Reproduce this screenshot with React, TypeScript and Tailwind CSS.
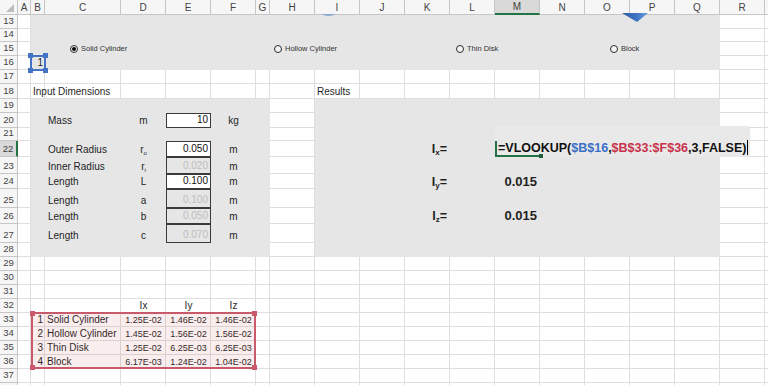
import React from "react";

const COLS = ["A", "B", "C", "D", "E", "F", "G", "H", "I", "J", "K", "L", "M", "N", "O", "P", "Q", "R", "S"];
const ROWS = Array.from({ length: 26 }, (_, i) => i + 13);

// column and row tracks of the sheet, shared by the gridline layer and the content layer
const GRID =
  "grid grid-cols-[18px_13px_14px_76px_45px_45px_45px_14px_45px_45px_45px_45px_45px_45px_45px_45px_45px_45px_45px_45px] grid-rows-[15px_14px_13px_14px_14px_14px_15px_14px_15px_13px_16px_17px_15px_19px_16px_19px_14px_14px_14px_14px_14px_14px_14px_14px_14px_14px_14px]";

function Radio({ label, on }: { label: string; on?: boolean }) {
  return (
    <div className="flex items-center gap-[3px] text-[7.5px] text-[#333]">
      <span className="w-[8px] h-[8px] rounded-full border border-[#2b2b2b] bg-[#f4f4f4] flex items-center justify-center">
        {on && <span className="w-[4px] h-[4px] rounded-full bg-black" />}
      </span>
      {label}
    </div>
  );
}

function Handles({ color }: { color: string }) {
  return (
    <>
      <span className={`absolute -left-[3px] -top-[3px] w-[5px] h-[5px] ${color}`} />
      <span className={`absolute -right-[3px] -top-[3px] w-[5px] h-[5px] ${color}`} />
      <span className={`absolute -left-[3px] -bottom-[3px] w-[5px] h-[5px] ${color}`} />
      <span className={`absolute -right-[3px] -bottom-[3px] w-[5px] h-[5px] ${color}`} />
    </>
  );
}

function InputRow({
  row,
  label,
  sym,
  value,
  unit,
  enabled,
}: {
  row: string;
  label: string;
  sym: React.ReactNode;
  value: string;
  unit: string;
  enabled?: boolean;
}) {
  return (
    <>
      <div className={`${row} col-[4/5] flex items-end pl-[3px] pb-[1px]`}>{label}</div>
      <div className={`${row} col-[5/6] flex items-end justify-center pb-[1px]`}>{sym}</div>
      <div
        className={`${row} col-[6/7] flex items-end justify-end pr-[2px] pb-[1px] border border-[#3a3a3a] ${
          enabled ? "bg-white text-[#111]" : "text-[#bdbdbd]"
        }`}
      >
        {value}
      </div>
      <div className={`${row} col-[7/8] flex items-end justify-center pb-[1px]`}>{unit}</div>
    </>
  );
}

function TableRow({ row, n, name, vals }: { row: string; n: string; name: string; vals: string[] }) {
  return (
    <>
      <div className={`${row} col-[3/4] flex items-end justify-end pr-[2px] pb-[1px]`}>{n}</div>
      <div className={`${row} col-[4/5] flex items-end pl-[2px] pb-[1px]`}>{name}</div>
      <div className={`${row} col-[5/6] flex items-end justify-center pb-[1px] text-[9px]`}>{vals[0]}</div>
      <div className={`${row} col-[6/7] flex items-end justify-center pb-[1px] text-[9px]`}>{vals[1]}</div>
      <div className={`${row} col-[7/8] flex items-end justify-center pb-[1px] text-[9px]`}>{vals[2]}</div>
    </>
  );
}

export default function App() {
  return (
    <div className="relative w-[768px] h-[385px] overflow-hidden bg-white font-['Liberation_Sans',Arial,sans-serif]">
      <div className="grid w-[810px]">
        {/* gridlines and headers */}
        <div className={`${GRID} col-start-1 row-start-1`}>
          <div className="relative border-r border-b border-[#c6c6c6] bg-[#f6f6f6]">
            <span className="absolute right-[3px] bottom-[2px] w-0 h-0 border-l-[8px] border-l-transparent border-b-[8px] border-b-[#bdbdbd]" />
          </div>
          {COLS.map((c) =>
            c === "M" ? (
              <div
                key={c}
                className="flex items-center justify-center border-r border-r-[#c6c6c6] border-b-2 border-b-[#217346] bg-[#d9d9d9] text-[10px] text-[#3d3d3d]"
              >
                {c}
              </div>
            ) : (
              <div
                key={c}
                className="flex items-center justify-center border-r border-b border-[#c6c6c6] bg-[#f6f6f6] text-[10px] text-[#444]"
              >
                {c === "S" ? "" : c}
              </div>
            )
          )}
          {ROWS.map((r) => (
            <React.Fragment key={r}>
              {r === 22 ? (
                <div className="flex items-end justify-center pb-[1px] border-r-2 border-r-[#217346] border-b border-b-[#c6c6c6] bg-[#d9d9d9] text-[9.5px] leading-[12px] text-[#3d3d3d]">
                  {r}
                </div>
              ) : (
                <div className="flex items-end justify-center pb-[1px] border-r border-b border-[#c6c6c6] bg-[#f6f6f6] text-[9.5px] leading-[12px] text-[#444]">
                  {r === 38 ? "" : r}
                </div>
              )}
              {COLS.map((c) => (
                <div key={c} className="border-r border-b border-[#dedede]" />
              ))}
            </React.Fragment>
          ))}
        </div>

        {/* sheet content */}
        <div className={`${GRID} col-start-1 row-start-1 text-[10px] leading-[12px] text-[#1f1f1f]`}>
          {/* shaded panels */}
          <div className="col-[3/19] row-[2/6] bg-[#e6e6e6]" />
          <div className="col-[3/9] row-[8/18] bg-[#e6e6e6]" />
          <div className="col-[10/19] row-[8/18] bg-[#e6e6e6]" />

          {/* shape options */}
          <div className="col-[4/6] row-[4/5] flex items-center pl-[25px]">
            <Radio label="Solid Cylinder" on />
          </div>
          <div className="col-[9/11] row-[4/5] flex items-center pl-[4px]">
            <Radio label="Hollow Cylinder" />
          </div>
          <div className="col-[13/15] row-[4/5] flex items-center pl-[6px]">
            <Radio label="Thin Disk" />
          </div>
          <div className="col-[16/18] row-[4/5] flex items-center pl-[25px]">
            <Radio label="Block" />
          </div>

          <div className="col-[3/4] row-[5/6] relative flex items-end justify-end pr-[2px] pb-[1px]">
            1
            <span className="absolute -inset-[1px] border-2 border-[#4472c4]" />
            <Handles color="bg-[#4472c4]" />
          </div>

          <div className="col-[3/8] row-[7/8] flex items-end pl-[2px] pb-[1px]">Input Dimensions</div>
          <div className="col-[10/12] row-[7/8] flex items-end pl-[2px] pb-[1px]">Results</div>

          {/* inputs */}
          <InputRow row="row-[9/10]" label="Mass" sym="m" value="10" unit="kg" enabled />
          <InputRow
            row="row-[11/12]"
            label="Outer Radius"
            sym={
              <span>
                r<sub className="text-[6px]">o</sub>
              </span>
            }
            value="0.050"
            unit="m"
            enabled
          />
          <InputRow
            row="row-[12/13]"
            label="Inner Radius"
            sym={
              <span>
                r<sub className="text-[6px]">i</sub>
              </span>
            }
            value="0.020"
            unit="m"
          />
          <InputRow row="row-[13/14]" label="Length" sym="L" value="0.100" unit="m" enabled />
          <InputRow row="row-[14/15]" label="Length" sym="a" value="0.100" unit="m" />
          <InputRow row="row-[15/16]" label="Length" sym="b" value="0.050" unit="m" />
          <InputRow row="row-[16/17]" label="Length" sym="c" value="0.070" unit="m" />

          {/* results */}
          <div className="col-[12/13] row-[11/12] flex items-center justify-end pr-[3px] text-[12.5px] font-bold">
            <span>
              I<sub className="text-[8px]">x</sub>=
            </span>
          </div>
          <div className="col-[12/13] row-[13/14] flex items-center justify-end pr-[3px] text-[12.5px] font-bold">
            <span>
              I<sub className="text-[8px]">y</sub>=
            </span>
          </div>
          <div className="col-[12/13] row-[15/16] flex items-center justify-end pr-[3px] text-[12.5px] font-bold">
            <span>
              I<sub className="text-[8px]">z</sub>=
            </span>
          </div>
          <div className="col-[14/15] row-[13/14] flex items-center justify-end pr-[3px] text-[13px] font-bold">0.015</div>
          <div className="col-[14/15] row-[15/16] flex items-center justify-end pr-[3px] text-[13px] font-bold">0.015</div>

          {/* in-cell formula editor */}
          <div className="col-[14/20] row-[10/12] mr-[15px] -mt-[2px] flex items-end pl-[3px] pb-[1px] bg-[#e9e9e9] text-[12.5px] leading-[15px] font-bold text-[#111] whitespace-nowrap">
            <span>
              =VLOOKUP(<span className="text-[#3b6fc6]">$B$16</span>,<span className="text-[#c8324b]">$B$33:$F$36</span>
              ,3,FALSE)
            </span>
            <span className="ml-[1px] mb-[1px] w-px h-[15px] bg-black" />
          </div>
          <div className="col-[14/15] row-[11/12] relative border-l-2 border-b-2 border-[#217346]">
            <span className="absolute -right-[3px] -bottom-[3px] w-[4px] h-[4px] bg-[#1e5e3a]" />
          </div>

          {/* lookup table */}
          <div className="col-[5/6] row-[21/22] flex items-end justify-center pb-[1px]">Ix</div>
          <div className="col-[6/7] row-[21/22] flex items-end justify-center pb-[1px]">Iy</div>
          <div className="col-[7/8] row-[21/22] flex items-end justify-center pb-[1px]">Iz</div>
          <TableRow row="row-[22/23]" n="1" name="Solid Cylinder" vals={["1.25E-02", "1.46E-02", "1.46E-02"]} />
          <TableRow row="row-[23/24]" n="2" name="Hollow Cylinder" vals={["1.45E-02", "1.56E-02", "1.56E-02"]} />
          <TableRow row="row-[24/25]" n="3" name="Thin Disk" vals={["1.25E-02", "6.25E-03", "6.25E-03"]} />
          <TableRow row="row-[25/26]" n="4" name="Block" vals={["6.17E-03", "1.24E-02", "1.04E-02"]} />
          <div className="col-[3/8] row-[22/26] relative -mt-[1px] border-2 border-[#c95a6c] bg-[#c0504d]/10">
            <Handles color="bg-[#c95a6c]" />
          </div>
        </div>
      </div>

      {/* bottoms of shapes sitting above the visible rows */}
      <svg className="absolute left-[622px] top-[13px]" width="26" height="10" viewBox="0 0 26 10">
        <defs>
          <linearGradient id="tri" x1="0" y1="0" x2="1" y2="0">
            <stop offset="0" stopColor="#2d5aa6" />
            <stop offset="0.55" stopColor="#3f74c4" />
            <stop offset="1" stopColor="#6aa2dc" />
          </linearGradient>
        </defs>
        <polygon points="0,0 26,0 15,9" fill="url(#tri)" />
      </svg>
      <svg className="absolute left-[321px] top-[14px]" width="15" height="4" viewBox="0 0 15 4">
        <path d="M0 0 Q7.5 4 15 0 Z" fill="#8ea6cf" />
      </svg>
    </div>
  );
}
